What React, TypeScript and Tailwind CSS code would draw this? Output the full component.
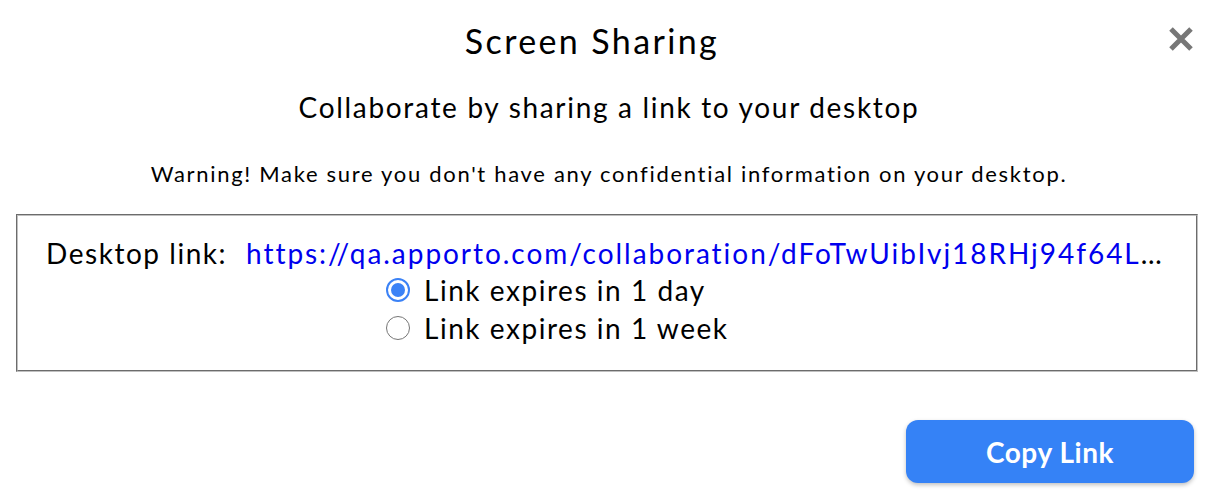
import React from "react";

export default function App() {
  return (
    <div className="w-[1218px] h-[502px] bg-white overflow-hidden relative font-['Lato',sans-serif] text-black">
      <button className="absolute left-[1168px] top-[26px] w-[26px] h-[26px]" aria-label="Close">
        <svg width="26" height="26" viewBox="0 0 26 26">
          <path d="M3 3 L23 23 M23 3 L3 23" stroke="#777777" strokeWidth="5" strokeLinecap="butt" />
        </svg>
      </button>
      <div className="flex flex-col items-center">
        <h1 className="mt-[18px] mr-[34px] h-[46px] leading-[46px] text-[34px] tracking-[0.07em] font-normal">Screen Sharing</h1>
        <p className="mt-[24px] h-[38px] leading-[38px] text-[28px] tracking-[0.06em]">Collaborate by sharing a link to your desktop</p>
        <p className="mt-[33px] h-[30px] leading-[30px] text-[22px] tracking-[0.077em]">Warning! Make sure you don't have any confidential information on your desktop.</p>
      </div>
      <div className="ml-[16px] mt-[25px] w-[1182px] h-[158px] border-2 [border-style:groove] border-[#c0c0c0] pt-[19px]">
        <div className="flex items-center h-[36px] text-[28px] leading-[36px] tracking-[0.055em] whitespace-nowrap">
          <span className="ml-[28px] w-[200px]">Desktop link:</span>
          <span className="text-[#0000ee] tracking-[0.07em]">https://qa.apporto.com/collaboration/dFoTwUibIvj18RHj94f64L</span>
          <span>…</span>
        </div>
        <div className="ml-[368px] flex flex-col text-[28px] tracking-[0.055em]">
          <label className="flex items-center h-[38px]">
            <span className="w-[24px] h-[24px] rounded-full border-2 border-[#3b82f6] flex items-center justify-center mr-[14px]">
              <span className="w-[14px] h-[14px] rounded-full bg-[#3b82f6]"></span>
            </span>
            <span>Link expires in 1 day</span>
          </label>
          <label className="flex items-center h-[38px]">
            <span className="w-[24px] h-[24px] rounded-full border-[1.5px] border-[#767676] mr-[14px] bg-white"></span>
            <span>Link expires in 1 week</span>
          </label>
        </div>
      </div>
      <div className="flex justify-end pr-[24px] mt-[48px]">
        <button className="w-[288px] h-[63px] rounded-[12px] bg-[#3582f6] text-white font-bold text-[28px] tracking-[0.02em] shadow-[0_2px_4px_rgba(0,0,0,0.25)]">
          Copy Link
        </button>
      </div>
    </div>
  );
}
